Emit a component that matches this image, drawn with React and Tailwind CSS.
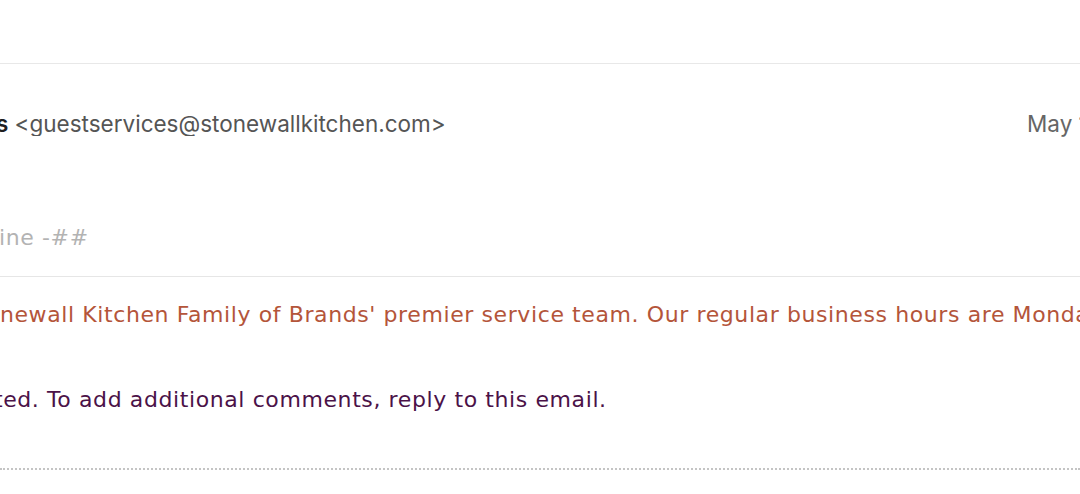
export default function App() {
  return (
    <div className="h-[494px] w-[1080px] overflow-hidden bg-white">
      {/* top strip */}
      <div className="h-[64px] border-b border-[#e8e8e8]" />

      {/* sender row */}
      <div className="flex items-center whitespace-nowrap pt-[48px] font-['Inter','Liberation_Sans',Arial,sans-serif] text-[22.5px] leading-[24px]">
        <div className="w-[1027px] shrink-0 overflow-hidden">
          <div className="ml-[-358px]">
            <span className="font-semibold text-[#1f1f1f]">Stonewall Kitchen Guest Services</span>
            <span className="text-[#555]"> &lt;guestservices@stonewallkitchen.com&gt;</span>
          </div>
        </div>
        <div className="shrink-0 text-[#666]">May 16, 2023, 10:42 AM</div>
      </div>

      {/* email body */}
      <div className="mt-[90px] font-['DejaVu_Sans',Verdana,sans-serif] whitespace-nowrap text-[22px] leading-[24px] tracking-[0.6px]">
        <div className="border-b border-[#e6e6e6] pb-[26px]">
          <p className="ml-[-457px] text-[#b3b3b3]">
            ##- Please type your reply above this line -##
          </p>
        </div>
        <p className="ml-[-381px] pt-[26px] text-[#b4553a]">
          Thank you for contacting the Stonewall Kitchen Family of Brands' premier service team. Our regular business hours are Monday through Friday, 8:00 AM to 5:00 PM EST.
        </p>
        <p className="ml-[-443px] mt-[61px] text-[#4b1248]">
          Your request (482915) has been updated. To add additional comments, reply to this email.
        </p>
        <div className="mt-[56px] border-t-2 border-dotted border-[#c4c4c4]" />
      </div>
    </div>
  );
}
